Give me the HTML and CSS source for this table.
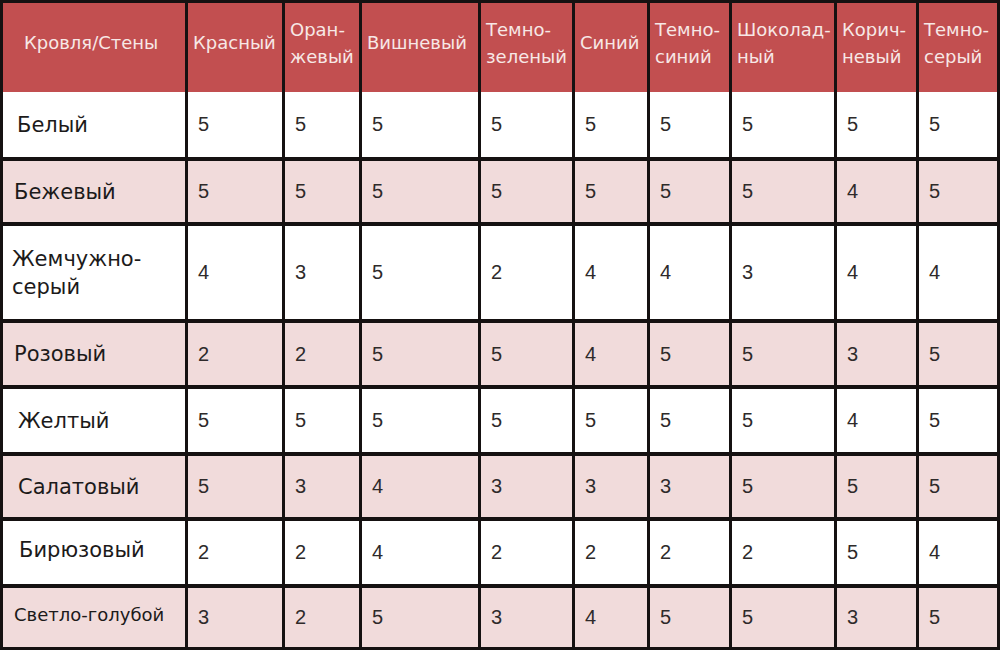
FILE: index.html
```html
<!DOCTYPE html>
<html lang="ru">
<head>
<meta charset="utf-8">
<title>Кровля/Стены</title>
<link rel="stylesheet" href="styles.css">
</head>
<body>
<div class="table">
  <div class="th first">Кровля/Стены</div>
  <div class="th">Красный</div>
  <div class="th">Оран-<br>жевый</div>
  <div class="th">Вишневый</div>
  <div class="th">Темно-<br>зеленый</div>
  <div class="th">Синий</div>
  <div class="th">Темно-<br>синий</div>
  <div class="th">Шоколад-<br>ный</div>
  <div class="th">Корич-<br>невый</div>
  <div class="th">Темно-<br>серый</div>

  <div class="td label row1 in15">Белый</div>
  <div class="td num row1">5</div><div class="td num row1">5</div><div class="td num row1">5</div><div class="td num row1">5</div><div class="td num row1">5</div><div class="td num row1">5</div><div class="td num row1">5</div><div class="td num row1">5</div><div class="td num row1">5</div>

  <div class="td label alt in12">Бежевый</div>
  <div class="td num alt">5</div><div class="td num alt">5</div><div class="td num alt">5</div><div class="td num alt">5</div><div class="td num alt">5</div><div class="td num alt">5</div><div class="td num alt">5</div><div class="td num alt">4</div><div class="td num alt">5</div>

  <div class="td label in10">Жемчужно-<br>серый</div>
  <div class="td num">4</div><div class="td num">3</div><div class="td num">5</div><div class="td num">2</div><div class="td num">4</div><div class="td num">4</div><div class="td num">3</div><div class="td num">4</div><div class="td num">4</div>

  <div class="td label alt in12">Розовый</div>
  <div class="td num alt">2</div><div class="td num alt">2</div><div class="td num alt">5</div><div class="td num alt">5</div><div class="td num alt">4</div><div class="td num alt">5</div><div class="td num alt">5</div><div class="td num alt">3</div><div class="td num alt">5</div>

  <div class="td label in16">Желтый</div>
  <div class="td num">5</div><div class="td num">5</div><div class="td num">5</div><div class="td num">5</div><div class="td num">5</div><div class="td num">5</div><div class="td num">5</div><div class="td num">4</div><div class="td num">5</div>

  <div class="td label alt in16">Салатовый</div>
  <div class="td num alt">5</div><div class="td num alt">3</div><div class="td num alt">4</div><div class="td num alt">3</div><div class="td num alt">3</div><div class="td num alt">3</div><div class="td num alt">5</div><div class="td num alt">5</div><div class="td num alt">5</div>

  <div class="td label in17 raised">Бирюзовый</div>
  <div class="td num">2</div><div class="td num">2</div><div class="td num">4</div><div class="td num">2</div><div class="td num">2</div><div class="td num">2</div><div class="td num">2</div><div class="td num">5</div><div class="td num">4</div>

  <div class="td label alt small in12 raised">Светло-голубой</div>
  <div class="td num alt">3</div><div class="td num alt">2</div><div class="td num alt">5</div><div class="td num alt">3</div><div class="td num alt">4</div><div class="td num alt">5</div><div class="td num alt">5</div><div class="td num alt">3</div><div class="td num alt">5</div>
</div>
</body>
</html>
```

FILE: styles.css
```css
html, body {
  margin: 0;
  padding: 0;
  background: #ffffff;
}

.table {
  width: 1000px;
  height: 650px;
  box-sizing: border-box;
  display: grid;
  grid-template-columns: 182px 94px 74px 116px 91px 72px 79px 102px 79px 78px;
  grid-template-rows: 89px 65px 65px 97px 66px 67px 65px 67px 63px;
  column-gap: 3px;
  row-gap: 0;
  padding: 3px;
  background: #151111;
  font-family: "DejaVu Sans", "Liberation Sans", sans-serif;
}

.th {
  background: #c24f50;
  color: #f7e8e6;
  font-size: 18px;
  line-height: 27px;
  display: flex;
  align-items: center;
  padding: 0 0 10px 5px;
  box-sizing: border-box;
  white-space: nowrap;
}

.th.first {
  padding-left: 21px;
}

.td {
  background: #ffffff;
  color: #1c1a1a;
  display: flex;
  align-items: center;
  box-sizing: border-box;
  border-top: 4px solid #151111;
}

.td.row1 {
  border-top: 0;
}

.td.alt {
  background: #f1dbdb;
}

.label {
  font-size: 21px;
  line-height: 28px;
  padding-left: 12px;
  white-space: nowrap;
}

.label.small {
  font-size: 18px;
}

.label.raised {
  padding-bottom: 6px;
}

.in10 { padding-left: 9px; }
.in12 { padding-left: 11px; }
.in15 { padding-left: 14px; }
.in16 { padding-left: 15px; }
.in17 { padding-left: 16px; }

.num {
  font-family: "Liberation Sans", Arial, sans-serif;
  font-size: 20px;
  color: #2e2a2a;
  padding-left: 10px;
}
```
